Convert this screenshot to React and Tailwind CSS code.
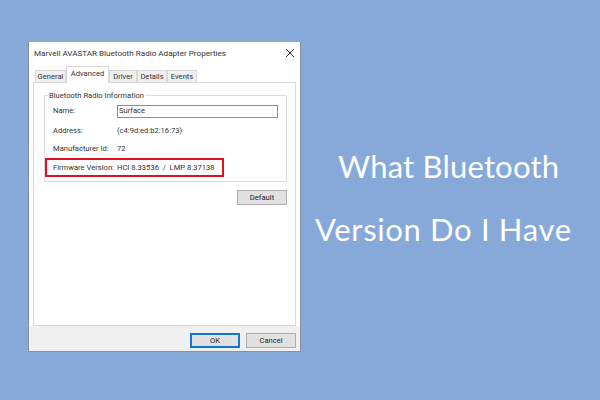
import React from 'react';

const tabs = ['General', 'Advanced', 'Driver', 'Details', 'Events'];

const Row = ({ label, children, className = '' }) => (
  <div className={`flex items-center h-[18px] whitespace-nowrap ${className}`}>
    <span className="w-[64px] shrink-0">{label}</span>
    {children}
  </div>
);

const Button = ({ children, className = 'border border-[#adadad]' }) => (
  <div className={`w-[50px] h-[15px] flex items-center justify-center bg-[#e1e1e1] text-[#222] ${className}`}>
    {children}
  </div>
);

export default function App() {
  return (
    <div className="w-[600px] h-[400px] overflow-hidden bg-[#87a9d9] flex items-start pl-[28px] pt-[42px]">
      {/* Properties dialog */}
      <div className="w-[273px] h-[310px] shrink-0 bg-[#f0f0f0] border-x border-b border-[#8a8f99] flex flex-col font-['Roboto',sans-serif] text-[7.6px] text-[#333]">
        <div className="h-[22px] bg-white flex items-center justify-between pl-[5px] pr-[5px] text-[8.1px] shrink-0">
          <span>Marvell AVASTAR Bluetooth Radio Adapter Properties</span>
          <svg width="10" height="10" viewBox="0 0 10 10" className="text-[#333]">
            <path d="M1 1l8 8M9 1l-8 8" stroke="currentColor" strokeWidth="1" fill="none" />
          </svg>
        </div>
        <div className="bg-white flex-1 flex flex-col px-[4px]">
          <div className="flex items-end h-[18px] pl-[2px] shrink-0">
            {tabs.map((tab) =>
              tab === 'Advanced' ? (
                <div key={tab} className="w-[43px] h-[17px] pb-[2px] flex items-center justify-center bg-white border border-b-0 border-[#d9d9d9] -mb-px relative">
                  {tab}
                </div>
              ) : (
                <div key={tab} className={`h-[12px] flex items-center justify-center bg-[#f0f0f0] border border-b-0 border-[#d9d9d9] ${tab === 'General' ? 'w-[31px]' : tab === 'Driver' ? 'w-[28px]' : 'w-[30px]'}`}>
                  {tab}
                </div>
              )
            )}
          </div>
          <div className="flex-1 border border-[#d9d9d9] bg-white pl-[10px] pr-[8px] pt-[12px] flex flex-col">
            <div className="relative h-[87px] border border-[#dcdcdc] pl-[8px] pr-[8px] pt-[6px] shrink-0">
              <span className="absolute -top-[6px] left-[3px] bg-white px-[1px] leading-[11px]">Bluetooth Radio Information</span>
              <Row label="Name:">
                <div className="flex-1 h-[13px] border border-[#4f9ce0] pl-[1px] flex items-center">Surface</div>
              </Row>
              <Row label="Address:" className="mt-[2px]">(c4:9d:ed:b2:16:73)</Row>
              <Row label="Manufacturer Id:">72</Row>
              <div className="-ml-[8px] w-[179px] h-[19px] border-2 border-[#e2101c] flex items-center pl-[6px] whitespace-nowrap">
                <span className="w-[64px] shrink-0">Firmware Version:</span>
                <span className="whitespace-pre">HCI 8.33536  /  LMP 8.37138</span>
              </div>
            </div>
            <div className="self-end mt-[8px]">
              <Button>Default</Button>
            </div>
          </div>
        </div>
        <div className="h-[25px] bg-[#f0f0f0] flex items-start justify-end gap-[6px] pt-[7px] pr-[4px] shrink-0">
          <Button className="border-2 border-[#0f78d4]">OK</Button>
          <Button>Cancel</Button>
        </div>
      </div>

      {/* Title */}
      <div className="flex-1 flex flex-col items-start text-white font-['Lato',sans-serif] text-[31px] leading-[63px] pt-[93px] whitespace-nowrap">
        <span className="ml-[37px] tracking-[0.2px]">What Bluetooth</span>
        <span className="ml-[14px] tracking-[0.65px]">Version Do I Have</span>
      </div>
    </div>
  );
}
